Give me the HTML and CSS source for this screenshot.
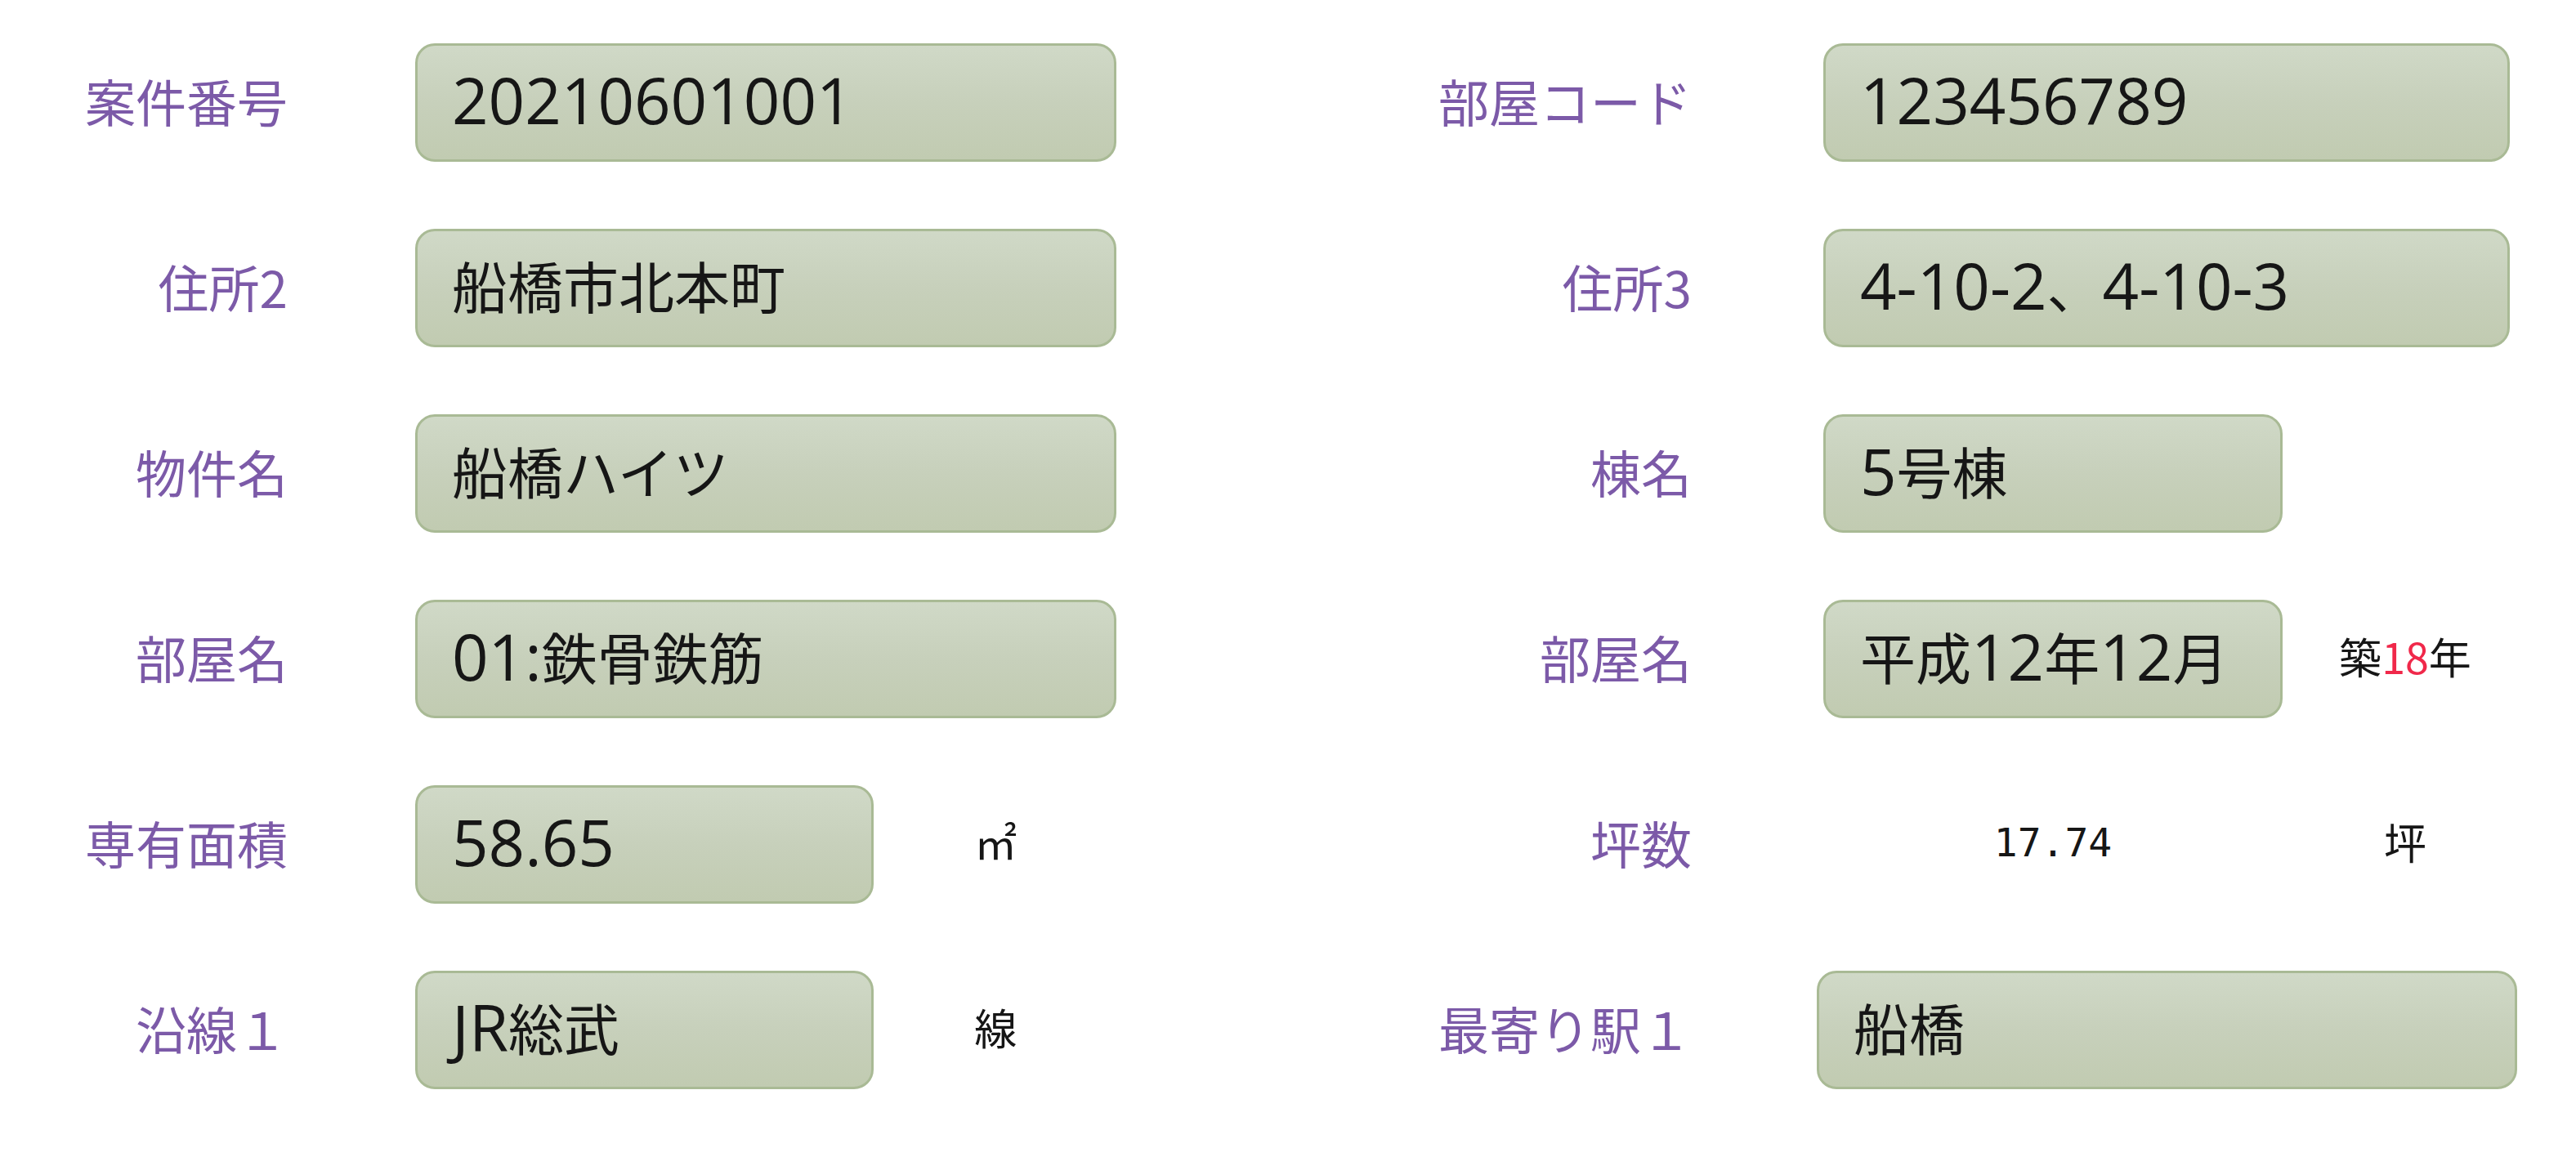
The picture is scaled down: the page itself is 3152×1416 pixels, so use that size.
FILE: index.html
```html
<!DOCTYPE html>
<html lang="ja">
<head>
<meta charset="utf-8">
<title>物件情報</title>
<link rel="stylesheet" href="styles.css">
</head>
<body>
<div class="form">
  <div class="label">案件番号</div>
  <div class="field"><div class="box box-wide"><span class="n">20210601001</span></div></div>
  <div class="label label-r">部屋コード</div>
  <div class="field"><div class="box box-rwide"><span class="n">123456789</span></div></div>

  <div class="label">住所2</div>
  <div class="field"><div class="box box-wide">船橋市北本町</div></div>
  <div class="label label-r">住所3</div>
  <div class="field"><div class="box box-rwide"><span class="n">4-10-2</span>、<span class="n">4-10-3</span></div></div>

  <div class="label">物件名</div>
  <div class="field"><div class="box box-wide">船橋ハイツ</div></div>
  <div class="label label-r">棟名</div>
  <div class="field"><div class="box box-short"><span class="n">5</span>号棟</div></div>

  <div class="label">部屋名</div>
  <div class="field"><div class="box box-wide"><span class="n">01:</span>鉄骨鉄筋</div></div>
  <div class="label label-r">部屋名</div>
  <div class="field"><div class="box box-short">平成<span class="n">12</span>年<span class="n">12</span>月</div><div class="unit">築<span class="red">18</span>年</div></div>

  <div class="label">専有面積</div>
  <div class="field"><div class="box box-short"><span class="n">58.65</span></div><div class="unit">㎡</div></div>
  <div class="label label-r">坪数</div>
  <div class="field"><div class="plain">17.74</div><div class="unit">坪</div></div>

  <div class="label">沿線１</div>
  <div class="field"><div class="box box-short"><span class="n">JR</span>総武</div><div class="unit">線</div></div>
  <div class="label label-r">最寄り駅１</div>
  <div class="field"><div class="box box-rfull">船橋</div></div>
</div>
</body>
</html>
```

FILE: styles.css
```css
html, body {
  margin: 0;
  padding: 0;
  background: #ffffff;
}

body {
  width: 3152px;
  height: 1416px;
  overflow: hidden;
  font-family: "Noto Sans CJK JP", sans-serif;
}

.form {
  display: grid;
  grid-template-columns: 508px 860px 863px 1fr;
  grid-auto-rows: 145px;
  row-gap: 82px;
  padding-top: 53px;
}

.label {
  display: flex;
  align-items: center;
  justify-content: flex-end;
  padding-right: 156px;
  font-size: 62px;
  color: #7c5aa8;
  line-height: 1;
  white-space: nowrap;
  padding-bottom: 6px;
}

.label-r {
  padding-right: 161px;
}

.field {
  display: flex;
  align-items: center;
}

.box {
  box-sizing: border-box;
  height: 145px;
  display: flex;
  align-items: center;
  padding-left: 42px;
  padding-bottom: 8px;
  border: 3px solid #a9ba95;
  border-radius: 24px;
  background: linear-gradient(to bottom, #d0d9c7 0%, #c7d0bb 50%, #c1cbb1 100%);
  font-size: 68px;
  color: #161616;
  white-space: nowrap;
  line-height: 1;
}

.n {
  font-family: "Open Sans", "Noto Sans", sans-serif;
  font-size: 78px;
}

.box-wide {
  width: 858px;
}

.box-short {
  width: 562px;
}

.box-rwide {
  width: 840px;
}

.box-rfull {
  width: 857px;
  margin-left: -8px;
}

.plain {
  width: 562px;
  text-align: center;
  font-family: "DejaVu Sans Mono", monospace;
  font-size: 48px;
  color: #161616;
  padding-bottom: 6px;
}

.unit {
  width: 300px;
  text-align: center;
  font-size: 52px;
  color: #161616;
  white-space: nowrap;
  padding-bottom: 8px;
}

.red {
  color: #f0284a;
}
```
